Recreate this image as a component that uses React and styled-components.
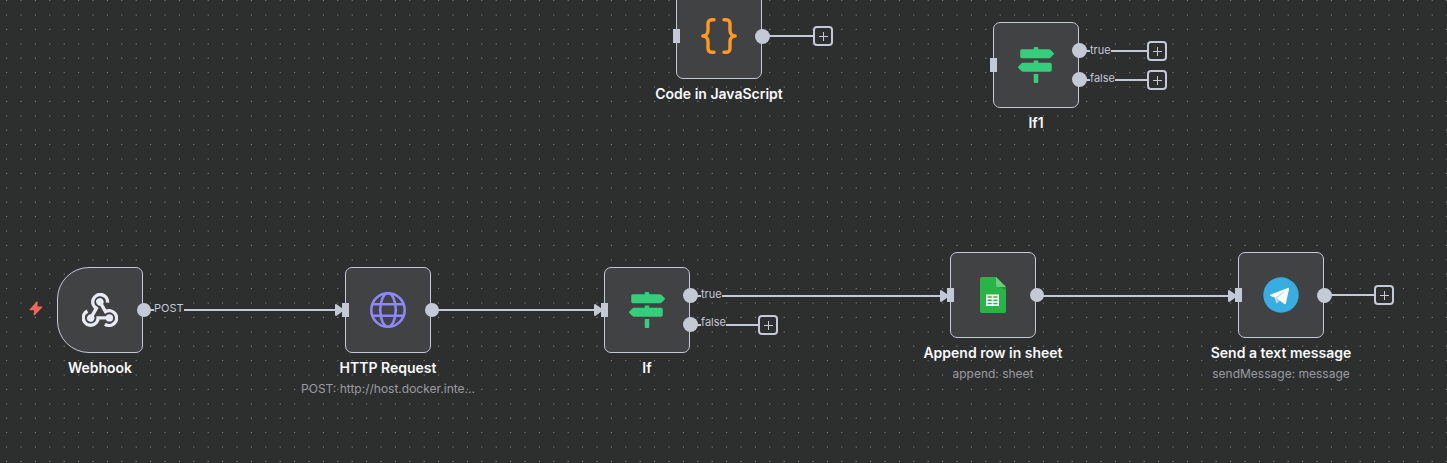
import React from 'react';
import styled, { createGlobalStyle } from 'styled-components';
import { FaMapSigns } from 'react-icons/fa';

const LINE = '#c3c9d5';
const CANVAS = '#2d2e2e';

const GlobalStyle = createGlobalStyle`
  *, *::before, *::after { box-sizing: border-box; }
  body { margin: 0; background: ${CANVAS}; font-family: Inter, sans-serif; }
`;

const Canvas = styled.main`
  position: relative;
  width: 100%;
  min-height: 100vh;
  overflow: hidden;
  background: ${CANVAS};
`;

const Layer = styled.svg`
  position: absolute;
  inset: 0;
  width: 100%;
  height: 100%;
  pointer-events: none;
`;

const NodeRoot = styled.article`
  position: absolute;
  left: ${(p) => p.$x}px;
  top: ${(p) => p.$y}px;
  width: 86px;
  display: flex;
  flex-direction: column;
  align-items: center;
`;

const NodeBox = styled.div`
  width: 86px;
  height: 86px;
  flex: none;
  display: grid;
  place-items: center;
  border: 1px solid ${LINE};
  border-radius: ${(p) => (p.$trigger ? '32px 7px 7px 32px' : '7px')};
  background: #414244;
`;

const NodeName = styled.h2`
  margin: 5px 0 0;
  color: #f7f8fa;
  font-size: 14px;
  font-weight: 600;
  line-height: 19px;
  white-space: nowrap;
`;

const NodeDetail = styled.p`
  margin: 4px 0 0;
  color: #9a9ba1;
  font-size: 12px;
  line-height: 15px;
  white-space: nowrap;
`;

const InputPort = styled.span`
  position: absolute;
  left: -3px;
  top: 36px;
  width: 7px;
  height: 14px;
  background: ${LINE};
`;

const OutputPort = styled.span`
  position: absolute;
  left: ${(p) => (p.$large ? 79 : 80)}px;
  top: ${(p) => p.$y - 7}px;
  width: ${(p) => (p.$large ? 15 : 14)}px;
  height: ${(p) => (p.$large ? 15 : 14)}px;
  border-radius: 50%;
  background: ${LINE};
`;

const PortLabel = styled.span`
  position: absolute;
  left: 97px;
  top: ${(p) => p.$y}px;
  background: ${CANVAS};
  color: ${LINE};
  font-size: 11px;
  line-height: 14px;
`;

const AddButton = styled.button`
  position: absolute;
  left: ${(p) => p.$x}px;
  top: ${(p) => p.$y}px;
  width: 20px;
  height: 20px;
  padding: 0;
  display: grid;
  place-items: center;
  border: 2px solid ${LINE};
  border-radius: 4px;
  background: ${CANVAS};
  color: ${LINE};
  cursor: pointer;
`;

const TriggerMark = styled.svg`
  position: absolute;
  left: -28px;
  top: 34px;
  width: 14px;
  height: 15px;
`;

const SignsIcon = styled(FaMapSigns)`
  width: 36px;
  height: 36px;
  color: #36cd7b;
`;

function BracesIcon() {
  return (
    <svg width="36" height="36" viewBox="0 0 36 36" fill="none" stroke="#ff9922" strokeWidth="3.400" strokeLinecap="round" strokeLinejoin="round" aria-hidden="true">
      <path d="M13 1.7h-2.2a3.8 3.8 0 0 0-3.8 3.8v7c0 3-2 5.5-5.2 5.5 3.2 0 5.2 2.5 5.2 5.5v7a3.8 3.8 0 0 0 3.8 3.8H13" />
      <path d="M23 1.7h2.2a3.8 3.8 0 0 1 3.8 3.8v7c0 3 2 5.5 5.2 5.5-3.2 0-5.2 2.5-5.2 5.5v7a3.8 3.8 0 0 1-3.8 3.8H23" />
    </svg>
  );
}

function WebhookIcon() {
  return (
    <svg width="36" height="34" viewBox="0 0 36 34" fill="none" stroke="#e8ebf4" strokeWidth="3.400" aria-hidden="true">
      {[0, 120, 240].map((turn) => (
        <g key={turn} transform={`rotate(${turn} 18 19.600)`}>
          <path d="M5.5 18.100A7.400 7.400 0 1 0 16.100 24.900H27.400" />
          <circle cx="27.400" cy="24.900" r="3.700" fill="#e8ebf4" stroke="none" />
        </g>
      ))}
    </svg>
  );
}

function GlobeIcon() {
  return (
    <svg width="36" height="36" viewBox="0 0 36 36" fill="none" stroke="#8f87f7" strokeWidth="2.600" aria-hidden="true">
      <circle cx="18" cy="18" r="16.700" />
      <ellipse cx="18" cy="18" rx="7.800" ry="16.700" />
      <path d="M3 12.200h30M3 23.800h30" />
    </svg>
  );
}

function SheetIcon() {
  return (
    <svg width="26" height="36" viewBox="0 0 26 36" aria-hidden="true">
      <path d="M2 0h14l10 10v24a2 2 0 0 1-2 2H2a2 2 0 0 1-2-2V2a2 2 0 0 1 2-2z" fill="#28b446" />
      <path d="M17 9l9 4v-3z" fill="#219b38" />
      <path d="M16 0l10 10h-8a2 2 0 0 1-2-2z" fill="#6ace7c" />
      <path d="M6 17.500h13v11.500H6zM7.600 19.200v1.500h4.200v-1.500zM13.300 19.200v1.500h4.200v-1.500zM7.600 22.400v1.500h4.200v-1.500zM13.300 22.400v1.500h4.200v-1.500zM7.600 25.700v1.500h4.200v-1.500zM13.300 25.700v1.500h4.200v-1.500z" fill="#fff" fillRule="evenodd" />
    </svg>
  );
}

function TelegramIcon() {
  return (
    <svg width="36" height="36" viewBox="0 0 36 36" aria-hidden="true">
      <circle cx="18" cy="18" r="17.700" fill="#37aee2" />
      <path d="M13.800 26.200c-.6 0-.5-.2-.7-.8l-1.700-5.700L24.800 12z" fill="#c8daea" />
      <path d="M13.800 26.200c.5 0 .7-.2.900-.4l2.400-2.400-3-1.800z" fill="#a9c9dd" />
      <path d="M14.100 21.600l7.200 5.300c.8.500 1.400.2 1.600-.7L26 12.300c.3-1.200-.5-1.700-1.200-1.300L7.700 17.600c-1.100.5-1.100 1.100-.2 1.400l4.400 1.400 10.100-6.400c.5-.3.900-.1.600.2z" fill="#fff" />
    </svg>
  );
}

function Bolt() {
  return (
    <TriggerMark viewBox="0 0 14 15" aria-hidden="true">
      <path d="M8.200 1 1.200 8.600h4.600L5.200 13.800 12.800 6H7.800z" fill="#f0675a" stroke="#f0675a" strokeWidth="1.200" strokeLinejoin="round" />
    </TriggerMark>
  );
}

const ICONS = {
  code: BracesIcon,
  signs: SignsIcon,
  webhook: WebhookIcon,
  globe: GlobeIcon,
  sheet: SheetIcon,
  telegram: TelegramIcon,
};

const NODES = [
  { id: 'code', icon: 'code', x: 676, y: -7, name: 'Code in JavaScript', input: true, outputs: [{ y: 43, large: true }] },
  { id: 'if1', icon: 'signs', x: 993, y: 22, name: 'If1', input: true, outputs: [{ y: 28, label: 'true', labelY: 21 }, { y: 57, label: 'false', labelY: 49 }] },
  { id: 'webhook', icon: 'webhook', x: 57, y: 267, name: 'Webhook', trigger: true, outputs: [{ y: 43, label: 'POST', labelY: 34 }] },
  { id: 'http', icon: 'globe', x: 345, y: 267, name: 'HTTP Request', detail: 'POST: http://host.docker.inte...', input: true, outputs: [{ y: 43 }] },
  { id: 'if', icon: 'signs', x: 604, y: 267, name: 'If', input: true, outputs: [{ y: 28, label: 'true', labelY: 20 }, { y: 57, label: 'false', labelY: 48 }] },
  { id: 'sheet', icon: 'sheet', x: 950, y: 252, name: 'Append row in sheet', detail: 'append: sheet', input: true, outputs: [{ y: 43 }] },
  { id: 'telegram', icon: 'telegram', x: 1238, y: 252, name: 'Send a text message', detail: 'sendMessage: message', input: true, outputs: [{ y: 43, large: true }] },
];

const EDGES = [
  { from: 150, to: 336, y: 310, arrow: true },
  { from: 438, to: 595, y: 310, arrow: true },
  { from: 697, to: 941, y: 296, arrow: true },
  { from: 1042, to: 1229, y: 296, arrow: true },
  { from: 769, to: 813, y: 36 },
  { from: 1086, to: 1148, y: 51 },
  { from: 1086, to: 1148, y: 80 },
  { from: 697, to: 759, y: 325 },
  { from: 1330, to: 1375, y: 295 },
];

const ADD_BUTTONS = [
  { x: 813, y: 26, label: 'Add node after Code in JavaScript' },
  { x: 1147, y: 41, label: 'Add node to the true branch of If1' },
  { x: 1147, y: 70, label: 'Add node to the false branch of If1' },
  { x: 758, y: 315, label: 'Add node to the false branch of If' },
  { x: 1374, y: 285, label: 'Add node after Send a text message' },
];

const STEPS = [0, 1, 2, 3, 4];

function DotGrid() {
  return (
    <Layer aria-hidden="true">
      <defs>
        <pattern id="dots" x="6" y="0" width="72" height="72" patternUnits="userSpaceOnUse">
          {STEPS.map((row) =>
            STEPS.map((col) => (
              <circle key={`${row}-${col}`} cx={0.6 + (col * 72) / 5} cy={0.6 + (row * 72) / 5} r="0.6" fill="#8d8f91" />
            ))
          )}
        </pattern>
      </defs>
      <rect width="100%" height="100%" fill="url(#dots)" />
    </Layer>
  );
}

function Edges() {
  return (
    <Layer aria-hidden="true">
      {EDGES.map((edge) => (
        <g key={`${edge.from}-${edge.y}`}>
          <path d={`M${edge.from} ${edge.y}H${edge.to}`} stroke={LINE} strokeWidth="2" />
          {edge.arrow && (
            <path d={`M${edge.to} ${edge.y - 5}l7 5-7 5z`} fill={LINE} stroke={LINE} strokeWidth="2" strokeLinejoin="round" />
          )}
        </g>
      ))}
    </Layer>
  );
}

function WorkflowNode({ node }) {
  const Icon = ICONS[node.icon];
  return (
    <NodeRoot $x={node.x} $y={node.y}>
      {node.trigger && <Bolt />}
      <NodeBox $trigger={node.trigger}>
        <Icon />
      </NodeBox>
      {node.input && <InputPort />}
      {node.outputs.map((out) => (
        <React.Fragment key={out.y}>
          <OutputPort $y={out.y} $large={out.large || node.outputs.length > 1} />
          {out.label && <PortLabel $y={out.labelY}>{out.label}</PortLabel>}
        </React.Fragment>
      ))}
      <NodeName>{node.name}</NodeName>
      {node.detail && <NodeDetail>{node.detail}</NodeDetail>}
    </NodeRoot>
  );
}

export default function App() {
  return (
    <>
      <GlobalStyle />
      <Canvas>
        <DotGrid />
        <Edges />
        {NODES.map((node) => (
          <WorkflowNode key={node.id} node={node} />
        ))}
        {ADD_BUTTONS.map((button) => (
          <AddButton key={button.label} type="button" aria-label={button.label} $x={button.x} $y={button.y}>
            <svg width="9" height="9" viewBox="0 0 9 9" stroke="currentColor" aria-hidden="true">
              <path d="M4.500 0v9M0 4.500h9" />
            </svg>
          </AddButton>
        ))}
      </Canvas>
    </>
  );
}
